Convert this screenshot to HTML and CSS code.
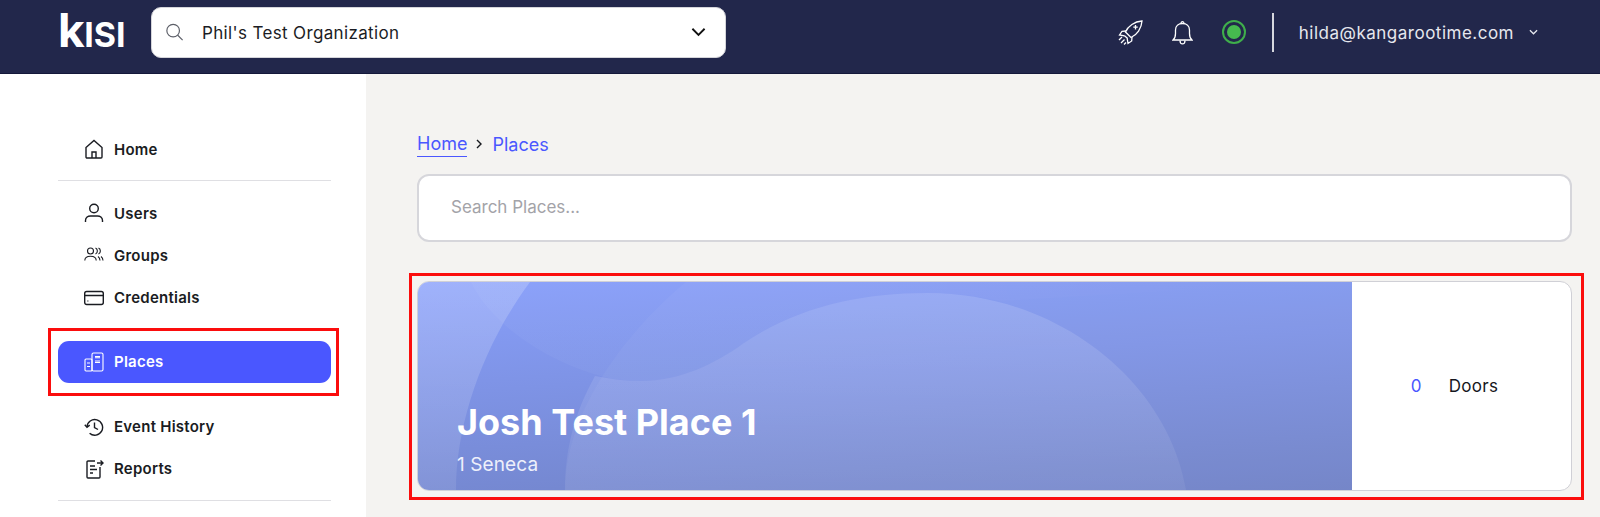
FILE: index.html
```html
<!DOCTYPE html>
<html>
<head>
    <title>Places</title>
    <link rel="stylesheet" href="styles.css">
</head>
<body>
    <header class="topbar">
        <div class="logo"><span>k</span><span class="logo-rest">isi</span></div>
        <div class="org-select">
            <svg class="org-search" viewBox="0 0 20 20"><circle cx="8.5" cy="8.5" r="7"/><path d="M13.6 13.6 19 19"/></svg>
            <span class="org-name">Phil's Test Organization</span>
            <svg class="org-chevron" viewBox="0 0 16 10"><path d="M1.5 1.5 8 8l6.500-6.500"/></svg>
        </div>
        <div class="topbar-right">
            <svg class="rocket" viewBox="0 0 25 25"><path d="M7.500 12C10 6 16.500 1.500 24 1 23.500 8.500 19 15 13 17.500z"/><path d="M8 11 4 11.300 1.500 15l5 .8M14 17l-.3 4-3.700 2.500-.8-5M6.500 15.800l3.200 2.700"/><path d="M17.500 5v4.400M15.300 7.200h4.400"/><path d="M1 20l3-3M3 23l3.500-3.500M6 24.500l2-2"/></svg>
            <svg class="bell" viewBox="0 0 21 25"><path d="M1 20c2-1.500 2.500-3.500 2.500-6.500V10C3.500 6 6.500 3.500 10.500 3.500S17.500 6 17.500 10v3.500c0 3 .5 5 2.500 6.500z"/><path d="M9 3.500C9 1 12 1 12 3.500M8 20.500c0 4.500 5 4.500 5 0"/></svg>
            <span class="status"><span class="status-dot"></span></span>
            <span class="topbar-divider"></span>
            <span class="user-email">hilda@kangarootime.com</span>
            <svg class="user-chevron" viewBox="0 0 10 6"><path d="M1 1l4 4 4-4"/></svg>
        </div>
    </header>

    <div class="page">
        <aside class="sidebar">
            <a class="nav-item">
                <svg class="nav-icon" viewBox="0 0 20 20"><path d="M2 8.500 10 1.500l8 7V18a1 1 0 0 1-1 1H3a1 1 0 0 1-1-1z"/><path d="M8 19v-6h4v6"/></svg>
                Home
            </a>
            <hr class="nav-line first">
            <a class="nav-item">
                <svg class="nav-icon" viewBox="0 0 20 20"><circle cx="10" cy="5.500" r="4.300"/><path d="M1.500 19v-1.500C1.500 14.500 4 13 6.500 13h7c2.500 0 5 1.500 5 4.500V19"/></svg>
                Users
            </a>
            <a class="nav-item">
                <svg class="nav-icon thin" viewBox="0 0 20 20"><circle cx="6.500" cy="6" r="3"/><path d="M.8 15.500C.8 12.500 3 11.200 6.500 11.200s5.700 1.300 5.700 4.300M11.500 3c2.500 1 2.500 5 0 6M14.500 3c2.500 1 2.500 5 0 6M14 11.500c1.300 1 2 2.300 2 4M17 11.500c1.300 1 2 2.300 2 4"/></svg>
                Groups
            </a>
            <a class="nav-item">
                <svg class="nav-icon" viewBox="0 0 20 20"><rect x="0.700" y="3.500" width="18.600" height="13" rx="2"/><path d="M.7 7.500h18.600M3.500 13h.8"/></svg>
                Credentials
            </a>
            <div class="places-wrap">
                <a class="nav-item active">
                    <svg class="nav-icon thin" viewBox="0 0 20 20"><rect x="8" y="1" width="11" height="18" rx="1.500"/><rect x="1" y="7" width="7" height="12" rx="1"/><path d="M11 4.500h5M11 5.800h5M11 9h5M11 10.500h5M3 11h3M3 14.500h3"/></svg>
                    Places
                </a>
            </div>
            <a class="nav-item">
                <svg class="nav-icon" viewBox="0 0 20 20"><path d="M3 10a7.800 7.800 0 1 1 2.600 6.200"/><path d="M.8 7.800 3 10.300l2.700-2.200M10.500 5.500V10.500l3.500 2"/></svg>
                Event History
            </a>
            <a class="nav-item">
                <svg class="nav-icon" viewBox="0 0 20 20"><path d="M11 2H4a1 1 0 0 0-1 1v15a1 1 0 0 0 1 1h11a1 1 0 0 0 1-1V8M6 7h5M6 10.500h7M6 14h3M13 4h6M16.500 1.500 19 4l-2.500 2.500"/></svg>
                Reports
            </a>
            <hr class="nav-line">
        </aside>

        <main class="content">
            <nav class="breadcrumb">
                <a class="crumb-link current">Home</a>
                <svg class="crumb-sep" viewBox="0 0 6 10"><path d="M1 1l4 4-4 4"/></svg>
                <a class="crumb-link">Places</a>
            </nav>
            <div class="search-box">Search Places...</div>

            <section class="place-card">
                <div class="place-banner">
                    <svg class="place-shapes" viewBox="0 0 934 208" preserveAspectRatio="none">
                        <defs>
                            <linearGradient id="fade" gradientUnits="userSpaceOnUse" x1="400" y1="0" x2="850" y2="0">
                                <stop offset="0" stop-color="#fff" stop-opacity="0.035"/>
                                <stop offset="1" stop-color="#fff" stop-opacity="0"/>
                            </linearGradient>
                            <linearGradient id="wave" gradientUnits="userSpaceOnUse" x1="0" y1="10" x2="0" y2="208">
                                <stop offset="0" stop-color="#fff" stop-opacity="0.14"/>
                                <stop offset="1" stop-color="#fff" stop-opacity="0.06"/>
                            </linearGradient>
                            <linearGradient id="corner" gradientUnits="userSpaceOnUse" x1="0" y1="0" x2="0" y2="208">
                                <stop offset="0" stop-color="#fff" stop-opacity="0.2"/>
                                <stop offset="1" stop-color="#fff" stop-opacity="0.09"/>
                            </linearGradient>
                        </defs>
                        <path fill="url(#corner)" d="M0 0H112C66 62 38 140 38 208H0z"/>
                        <path fill="url(#fade)" d="M53 0C72 40 122 75 176 92 192 97 208 99 223 99 262 99 297 82 326 61 378 26 440 11 510 11 535 11 560 14 582 19L900 0z"/>
                        <path fill="#fff" fill-opacity="0.04" d="M268 0C210 48 147 128 147 208H1153V0z"/>
                        <path fill="url(#wave)" d="M147 208C147 165 158 128 177 94 192 97 208 99 223 99 262 99 297 82 326 61 378 26 440 11 510 11 640 11 750 100 768 208z"/>
                    </svg>
                    <div class="place-text">
                        <h2 class="place-name">Josh Test Place 1</h2>
                        <p class="place-address">1 Seneca</p>
                    </div>
                </div>
                <div class="place-stats">
                    <span class="door-count">0</span>
                    <span class="door-label">Doors</span>
                </div>
            </section>
        </main>
    </div>
</body>
</html>
```

FILE: styles.css
```css
* {
    box-sizing: border-box;
}

html, body {
    height: 100%;
}

body {
    margin: 0;
    overflow: hidden;
    font-family: Inter, "Liberation Sans", sans-serif;
    background-color: #fff;
    color: #16181d;
}

/* top bar */
.topbar {
    display: flex;
    align-items: center;
    height: 74px;
    padding: 0 62px 9px 58px;
    background-color: #22274b;
    border-bottom: 1px solid #14183a;
}

.logo {
    width: 67px;
    margin-right: 26px;
    color: white;
    font-size: 46px;
    font-weight: 700;
    line-height: 43px;
    letter-spacing: -0.5px;
    white-space: nowrap;
}

.logo-rest {
    font-size: 34px;
    text-transform: uppercase;
    letter-spacing: 0;
}

.org-select {
    display: flex;
    align-items: center;
    width: 575px;
    height: 51px;
    padding: 0 19px 0 13px;
    background-color: white;
    border: 1px solid #d5d5da;
    border-radius: 10px;
}

.org-search {
    width: 19px;
    height: 18px;
    margin-right: 18px;
    fill: none;
    stroke: #5c5f68;
    stroke-width: 1.300;
}

.org-name {
    padding-top: 2px;
    font-size: 17px;
    letter-spacing: 0.350px;
    color: #1b1d24;
}

.org-chevron {
    width: 15px;
    height: 10px;
    margin-left: auto;
    fill: none;
    stroke: #111;
    stroke-width: 2;
}

.topbar-right {
    display: flex;
    align-items: center;
    margin-left: auto;
}

.rocket {
    width: 25px;
    height: 25px;
    fill: none;
    stroke: white;
    stroke-width: 1.300;
}

.bell {
    width: 21px;
    height: 25px;
    margin-left: 29px;
    fill: none;
    stroke: white;
    stroke-width: 1.300;
}

.status {
    display: flex;
    align-items: center;
    justify-content: center;
    width: 24px;
    height: 24px;
    margin-left: 29px;
    border: 2px solid #3fae4b;
    border-radius: 50%;
}

.status-dot {
    width: 14px;
    height: 14px;
    background-color: #46b94f;
    border-radius: 50%;
}

.topbar-divider {
    width: 2px;
    height: 39px;
    margin: 0 25px 0 26px;
    background-color: #d6d7de;
}

.user-email {
    padding-top: 2px;
    font-size: 17px;
    color: #e6e7ee;
    letter-spacing: 0.500px;
}

.user-chevron {
    width: 9px;
    height: 6px;
    margin-left: 15px;
    fill: none;
    stroke: #e6e7ee;
    stroke-width: 1.400;
}

/* page */
.page {
    display: flex;
    height: calc(100% - 74px);
}

.sidebar {
    flex: none;
    width: 366px;
    padding: 54px 35px 0 58px;
    background-color: white;
}

.nav-item {
    display: flex;
    align-items: center;
    height: 42px;
    padding-left: 26px;
    margin-bottom: 0.300px;
    font-size: 15px;
    font-weight: 600;
    letter-spacing: 0.250px;
    color: #1a1c22;
    border-radius: 11px;
}

.nav-icon {
    flex: none;
    width: 20px;
    height: 20px;
    margin-right: 10px;
    fill: none;
    stroke: currentColor;
    stroke-width: 1.400;
}

.nav-icon.thin {
    stroke-width: 1.100;
}

.nav-line {
    height: 1px;
    margin: 10px 0 0;
    background-color: #dfdfe3;
    border: none;
}

.nav-line.first {
    margin: 10px 0 11px;
}

.places-wrap {
    position: relative;
    margin: 22px 0 23px;
}

.places-wrap::after {
    content: "";
    position: absolute;
    top: -13px;
    right: -8px;
    bottom: -13px;
    left: -10px;
    border: 3px solid #fb0d0d;
}

.nav-item.active {
    margin-bottom: 0;
    background-color: #4a57ff;
    color: white;
}

/* main */
.content {
    flex: 1;
    padding: 56px 28px 0 51px;
    background-color: #f4f3f1;
}

.breadcrumb {
    display: flex;
    align-items: center;
    height: 28px;
    font-size: 18px;
    color: #4a57ff;
}

.crumb-link.current {
    border-bottom: 1px solid #4a57ff;
    line-height: 24px;
}

.crumb-sep {
    width: 6px;
    height: 10px;
    margin: 0 10px 0 9px;
    fill: none;
    stroke: #16181d;
    stroke-width: 1.400;
}

.search-box {
    display: flex;
    align-items: center;
    height: 68px;
    margin-top: 16px;
    padding-left: 32px;
    padding-bottom: 2px;
    font-size: 17px;
    color: #a3a3a8;
    background-color: white;
    border: 2px solid #d6d6db;
    border-radius: 12px;
}

.place-card {
    position: relative;
    display: flex;
    height: 210px;
    margin-top: 39px;
    background-color: white;
    border: 1px solid #d0d0d6;
    border-radius: 12px;
}

.place-card::after {
    content: "";
    position: absolute;
    top: -9px;
    right: -13px;
    bottom: -10px;
    left: -9px;
    border: 3px solid #fb0d0d;
}

.place-banner {
    position: relative;
    flex: none;
    display: flex;
    align-items: flex-end;
    width: 934px;
    padding: 0 0 13px 39px;
    overflow: hidden;
    background: linear-gradient(176deg, #889ffb, #7082c6);
    border-radius: 11px 0 0 11px;
}

.place-shapes {
    position: absolute;
    top: 0;
    left: 0;
    width: 100%;
    height: 100%;
}

.place-text {
    position: relative;
    color: white;
}

.place-name {
    margin: 0 0 9px;
    font-size: 36px;
    font-weight: 700;
    line-height: 44px;
}

.place-address {
    margin: 0;
    font-size: 19px;
    line-height: 24px;
    letter-spacing: 0.100px;
    color: #eef0fb;
}

.place-stats {
    flex: 1;
    display: flex;
    align-items: center;
    justify-content: center;
    gap: 27px;
    padding-right: 14px;
    font-size: 17px;
    letter-spacing: 0.300px;
}

.door-count {
    color: #4a57ff;
}
```
